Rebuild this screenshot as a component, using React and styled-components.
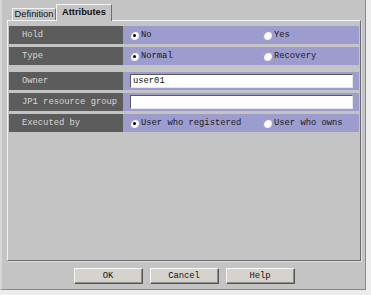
import React from "react";
import styled, { createGlobalStyle } from "styled-components";

const Global = createGlobalStyle`
  html, body { margin: 0; padding: 0; background: #ededed; }
  #root { width: 371px; height: 295px; }
`;

const Window = styled.div`
  box-sizing: border-box;
  width: 366px;
  height: 290px;
  background: #c4c4c4;
  border-right: 1px solid #8a8a8a;
  border-bottom: 1px solid #8a8a8a;
  border-left: 2px solid #d6d6d6;
  padding: 4px 0 0 5px;
  display: flex;
  flex-direction: column;
`;

const TabBar = styled.div`
  display: flex;
  align-items: flex-end;
  height: 16px;
  padding-left: 5px;
  position: relative;
  z-index: 1;
`;

const Tab = styled.div`
  box-sizing: border-box;
  height: ${(p) => (p.$active ? "17px" : "12px")};
  margin-bottom: ${(p) => (p.$active ? "-1px" : "0")};
  width: ${(p) => p.$w}px;
  background: #c4c4c4;
  border-top: 1px solid #f2f2f2;
  border-left: 1px solid #f2f2f2;
  border-right: 1px solid #707070;
  font-family: "Liberation Sans", Arial, sans-serif;
  font-size: 9.3px;
  font-weight: ${(p) => (p.$active ? "bold" : "normal")};
  color: #111;
  display: flex;
  align-items: ${(p) => (p.$active ? "flex-start" : "center")};
  padding-top: ${(p) => (p.$active ? "2px" : "0")};
  justify-content: center;
  line-height: 11px;
`;

const Panel = styled.div`
  box-sizing: border-box;
  width: 354px;
  height: 241px;
  border-top: 1px solid #f2f2f2;
  border-left: 1px solid #f2f2f2;
  border-right: 1px solid #6a6a6a;
  border-bottom: 1px solid #6a6a6a;
  box-shadow: 1px 1px 0 #e2e2e2;
  padding: 5px 1px 0 1px;
  display: flex;
  flex-direction: column;
`;

const Group = styled.div`
  display: flex;
  flex-direction: column;
  gap: 3px;
  margin-bottom: 7px;
`;

const Row = styled.div`
  display: grid;
  grid-template-columns: 114px 236px;
  height: 18px;
`;

const mono = `
  font-family: "Liberation Mono", "Courier New", monospace;
  font-size: 8.8px;
`;

const Label = styled.div`
  ${mono}
  background: #5c5c5c;
  color: #d6d6d6;
  display: flex;
  align-items: center;
  padding-left: 13px;
  white-space: nowrap;
`;

const Value = styled.div`
  background: #9c9ccf;
  display: grid;
  grid-template-columns: ${(p) => (p.$input ? "1fr" : "133px 1fr")};
  align-items: center;
  padding: 0 6px 0 7px;
`;

const Choice = styled.label`
  ${mono}
  color: #1a1a1a;
  display: flex;
  align-items: center;
  gap: 2px;
  white-space: nowrap;
`;

const Radio = styled.span`
  box-sizing: border-box;
  width: 9px;
  height: 9px;
  border-radius: 50%;
  background: radial-gradient(circle at 60% 60%, #ffffff 0%, #f4f4f4 55%, #cfcfcf 100%);
  box-shadow: inset 1px 1px 0 #9a9a9a;
  display: flex;
  align-items: center;
  justify-content: center;
  &::after {
    content: "";
    width: 3px;
    height: 3px;
    border-radius: 50%;
    background: ${(p) => (p.$on ? "#000" : "transparent")};
  }
`;

const TextBox = styled.div`
  ${mono}
  box-sizing: border-box;
  height: 14px;
  background: #fff;
  border-top: 1px solid #5a5a5a;
  border-left: 1px solid #5a5a5a;
  border-right: 1px solid #e6e6e6;
  border-bottom: 1px solid #e6e6e6;
  color: #111;
  padding-left: 2px;
  display: flex;
  align-items: center;
`;

const Buttons = styled.div`
  display: flex;
  justify-content: center;
  gap: 7px;
  margin-top: 7px;
  padding-right: 4px;
`;

const Button = styled.button`
  ${mono}
  box-sizing: border-box;
  width: 69px;
  height: 16px;
  padding: 0;
  background: #d6d3cc;
  color: #111;
  border-top: 1px solid #f6f6f6;
  border-left: 1px solid #f6f6f6;
  border-right: 1px solid #555;
  border-bottom: 1px solid #555;
  box-shadow: inset -1px -1px 0 #8c8c8c;
`;

const RadioRow = ({ label, options, selected }) => (
  <Row>
    <Label>{label}</Label>
    <Value>
      {options.map((o, i) => (
        <Choice key={o}>
          <Radio $on={i === selected} />
          {o}
        </Choice>
      ))}
    </Value>
  </Row>
);

const InputRow = ({ label, value }) => (
  <Row>
    <Label>{label}</Label>
    <Value $input>
      <TextBox>{value}</TextBox>
    </Value>
  </Row>
);

export default function App() {
  return (
    <>
      <Global />
      <Window>
        <TabBar>
          <Tab $w={44}>Definition</Tab>
          <Tab $w={56} $active>Attributes</Tab>
        </TabBar>
        <Panel>
          <Group>
            <RadioRow label="Hold" options={["No", "Yes"]} selected={0} />
            <RadioRow label="Type" options={["Normal", "Recovery"]} selected={0} />
          </Group>
          <Group>
            <InputRow label="Owner" value="user01" />
            <InputRow label="JP1 resource group" value="" />
            <RadioRow
              label="Executed by"
              options={["User who registered", "User who owns"]}
              selected={0}
            />
          </Group>
        </Panel>
        <Buttons>
          <Button>OK</Button>
          <Button>Cancel</Button>
          <Button>Help</Button>
        </Buttons>
      </Window>
    </>
  );
}
